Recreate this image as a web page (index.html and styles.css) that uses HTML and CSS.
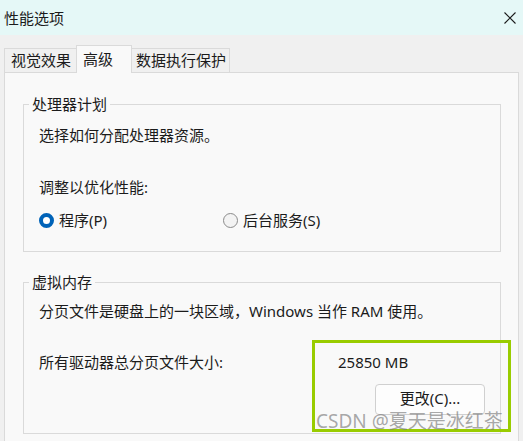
FILE: index.html
```html
<!DOCTYPE html>
<html lang="zh-CN">
<head>
<meta charset="utf-8">
<link rel="stylesheet" href="styles.css">
</head>
<body>
<div class="window">
  <div class="titlebar">
    <span class="title">性能选项</span>
    <svg class="close" width="12" height="12" viewBox="0 0 12 12"><path d="M0.5 0.5 L11.5 11.5 M11.5 0.5 L0.5 11.5" stroke="#1a1a1a" stroke-width="1.1" fill="none"/></svg>
  </div>
  <div class="tabs">
    <div class="tab tab-visual">视觉效果</div>
    <div class="tab tab-active">高级</div>
    <div class="tab tab-dep">数据执行保护</div>
  </div>
  <div class="panel">
    <div class="group group-cpu">
      <span class="legend">处理器计划</span>
      <p class="line">选择如何分配处理器资源。</p>
      <p class="line line-gap">调整以优化性能:</p>
      <div class="radios">
        <label class="radio"><span class="dot dot-on"></span>程序(P)</label>
        <label class="radio"><span class="dot"></span>后台服务(S)</label>
      </div>
    </div>
    <div class="group group-vm">
      <span class="legend">虚拟内存</span>
      <p class="line line-first">分页文件是硬盘上的一块区域，Windows 当作 RAM 使用。</p>
      <div class="size-row">
        <span>所有驱动器总分页文件大小:</span>
        <span>25850 MB</span>
      </div>
      <div class="btn-row"><button class="btn"><span class="btn-label">更改(C)...</span></button></div>
    </div>
  </div>
  <div class="highlight"></div>
  <div class="watermark">CSDN @夏天是冰红茶</div>
</div>
</body>
</html>
```
FILE: styles.css
```css
html, body {
  margin: 0;
  padding: 0;
  background: #f0f0f0;
  overflow: hidden;
}
.window {
  position: relative;
  width: 523px;
  height: 441px;
  overflow: hidden;
  font-family: "Noto Sans", "Noto Sans CJK SC", sans-serif;
  font-size: 15px;
  color: #1b1b1b;
}
.titlebar {
  height: 35px;
  background: #e5f8f7;
  display: flex;
  align-items: center;
  justify-content: space-between;
  padding: 0 7px 0 4px;
}
.title {
  line-height: 20px;
}
.close {
  display: block;
}
.tabs {
  display: flex;
  align-items: flex-end;
  padding-left: 4px;
  margin-top: 10px;
  position: relative;
  z-index: 1;
}
.tab {
  box-sizing: border-box;
  height: 24px;
  line-height: 23px;
  border: 1px solid #dadada;
  border-bottom: none;
  background: #f0f0f0;
  white-space: nowrap;
}
.tab-visual {
  width: 72px;
  padding-left: 6px;
  border-right: none;
}
.tab-active {
  width: 56px;
  height: 28px;
  line-height: 26px;
  padding-left: 6px;
  background: #f9f9f9;
  margin-bottom: -1px;
}
.tab-dep {
  width: 98px;
  padding-left: 4px;
  border-left: none;
}
.panel {
  margin-left: 4px;
  width: 515px;
  box-sizing: border-box;
  height: 400px;
  border: 1px solid #dadada;
  background: #f9f9f9;
  padding: 31px 17px 0 18px;
}
.group {
  position: relative;
  border: 1px solid #dadada;
  padding: 20px 15px 21px 15px;
}
.group-vm {
  margin-top: 30px;
  padding-top: 18px;
  padding-bottom: 18px;
}
.legend {
  position: absolute;
  top: -11px;
  left: 5px;
  padding: 0 3px;
  background: #f9f9f9;
  line-height: 20px;
}
.line {
  margin: 0;
  line-height: 20px;
}
.line-gap {
  margin-top: 32px;
}
.radios {
  display: flex;
  margin-top: 13px;
  line-height: 20px;
}
.radio {
  display: flex;
  align-items: center;
  gap: 5px;
  width: 184px;
}
.dot {
  box-sizing: border-box;
  width: 15px;
  height: 15px;
  border-radius: 50%;
  border: 1px solid #8b8b8b;
  background: #f3f3f3;
}
.dot-on {
  border: 4px solid #0063b8;
  background: #ffffff;
}
.size-row {
  display: grid;
  grid-template-columns: 299px auto;
  margin-top: 31px;
  line-height: 20px;
}
.btn-row {
  display: flex;
  justify-content: flex-end;
  margin-top: 12px;
}
.btn {
  box-sizing: border-box;
  width: 110px;
  height: 31px;
  border: 1px solid #d0d0d0;
  border-radius: 4px;
  background: #fdfdfd;
  font: inherit;
  color: #1b1b1b;
  padding: 0 0 4px 0;
  display: flex;
  align-items: center;
  justify-content: center;
}
.btn-label {
  line-height: 18px;
}
.highlight {
  position: absolute;
  left: 312px;
  top: 340px;
  width: 199px;
  height: 92px;
  box-sizing: border-box;
  border: 3px solid #99cc00;
}
.watermark {
  position: absolute;
  left: 316px;
  top: 411px;
  font-size: 19px;
  line-height: 20px;
  color: rgba(120, 120, 120, 0.65);
  white-space: nowrap;
}
```
